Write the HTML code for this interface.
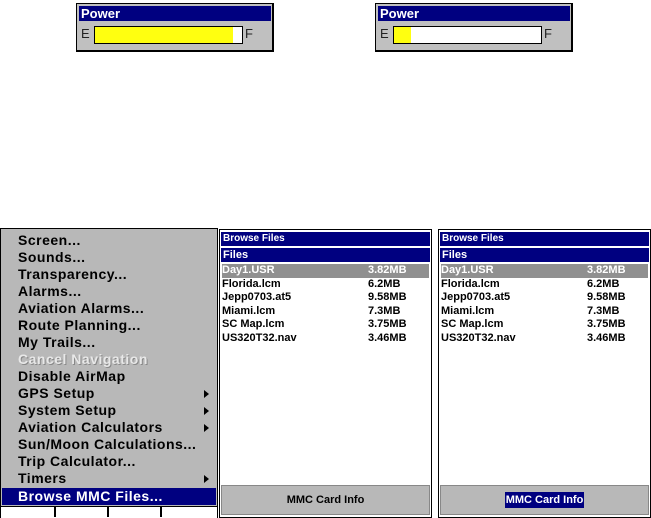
<html><head><style>
body{margin:0;width:651px;height:518px;background:#fff;position:relative;overflow:hidden;font-family:"Liberation Sans",sans-serif}
.a{position:absolute}
.pw{border:1px solid #000;border-right-width:2px;border-bottom-width:2px;background:#c0c0c0;width:195px;height:46px;top:3px}
.pw .t{left:2px;top:2px;width:192px;height:15px;background:#000080;color:#fff;font-weight:bold;font-size:13px;line-height:15px;text-indent:2px}
.pw .e{left:4px;top:22px;font-size:13px;color:#222}
.pw .f{left:168px;top:22px;font-size:13px;color:#222}
.pw .b{left:17px;top:22px;width:147px;height:16px;border:1px solid #000;background:#fff}
.menu{left:0;top:228px;width:216px;height:288px;border:1px solid #000;background:#b8b8b8}
.mi{left:17px;font-size:14px;font-weight:bold;color:#000;letter-spacing:.5px;line-height:17px}
.ar{right:8px;width:0;height:0;border-left:5px solid #000;border-top:4px solid transparent;border-bottom:4px solid transparent}
.fp{top:229px;width:211px;height:287px;border:1px solid #000;background:#fff}
.fp .t{left:1px;top:2px;width:209px;height:14px;background:#000080;color:#fff;font-size:10px;font-weight:bold;line-height:14px;text-indent:2px}
.fp .h{left:1px;top:18px;width:209px;height:14px;background:#000080;color:#fff;font-size:11px;font-weight:bold;line-height:14px;text-indent:2px}
.fp .r{left:2px;width:207px;height:13.5px;font-size:11px;font-weight:bold;line-height:13.5px}
.fp .r span{position:absolute;left:146px}
.fp .btn{left:1px;top:255px;width:207px;height:28px;background:#b8b8b8;border:1px solid #888;font-size:11px;font-weight:bold;text-align:center;line-height:28px}
</style></head><body>
<div class="a pw" style="left:76px"><div class="a t">Power</div><div class="a e">E</div><div class="a b"><div style="width:138px;height:16px;background:#ffff10"></div></div><div class="a f">F</div></div>
<div class="a pw" style="left:375px"><div class="a t">Power</div><div class="a e">E</div><div class="a b"><div style="width:17px;height:16px;background:#ffff10"></div></div><div class="a f">F</div></div>

<div class="a menu">
<div class="a mi" style="top:3px">Screen...</div>
<div class="a mi" style="top:20px">Sounds...</div>
<div class="a mi" style="top:37px">Transparency...</div>
<div class="a mi" style="top:54px">Alarms...</div>
<div class="a mi" style="top:71px">Aviation Alarms...</div>
<div class="a mi" style="top:88px">Route Planning...</div>
<div class="a mi" style="top:105px">My Trails...</div>
<div class="a mi" style="top:122px;color:#e8e8e8;text-shadow:1px 1px #888">Cancel Navigation</div>
<div class="a mi" style="top:139px">Disable AirMap</div>
<div class="a mi" style="top:156px">GPS Setup</div><div class="a ar" style="top:161px"></div>
<div class="a mi" style="top:173px">System Setup</div><div class="a ar" style="top:178px"></div>
<div class="a mi" style="top:190px">Aviation Calculators</div><div class="a ar" style="top:195px"></div>
<div class="a mi" style="top:207px">Sun/Moon Calculations...</div>
<div class="a mi" style="top:224px">Trip Calculator...</div>
<div class="a mi" style="top:241px">Timers</div><div class="a ar" style="top:246px"></div>
<div class="a" style="left:1px;top:259px;width:214px;height:17px;background:#000080"></div>
<div class="a mi" style="top:259px;color:#fff">Browse MMC Files...</div>
<div class="a" style="left:0;top:277px;width:216px;height:11px;background:#fff;border-top:1px solid #000"></div>
<div class="a" style="left:53px;top:277px;width:2px;height:11px;background:#000"></div>
<div class="a" style="left:106px;top:277px;width:2px;height:11px;background:#000"></div>
<div class="a" style="left:159px;top:277px;width:2px;height:11px;background:#000"></div>
</div>

<div class="a fp" style="left:219px">
<div class="a t">Browse Files</div><div class="a h">Files</div>
<div class="a r" style="top:34px;background:#909090;color:#fff">Day1.USR<span>3.82MB</span></div>
<div class="a r" style="top:47.5px">Florida.lcm<span>6.2MB</span></div>
<div class="a r" style="top:61px">Jepp0703.at5<span>9.58MB</span></div>
<div class="a r" style="top:74.5px">Miami.lcm<span>7.3MB</span></div>
<div class="a r" style="top:88px">SC Map.lcm<span>3.75MB</span></div>
<div class="a r" style="top:101.5px">US320T32.nav<span>3.46MB</span></div>
<div class="a btn">MMC Card Info</div>
</div>
<div class="a fp" style="left:438px">
<div class="a t">Browse Files</div><div class="a h">Files</div>
<div class="a r" style="top:34px;background:#909090;color:#fff">Day1.USR<span>3.82MB</span></div>
<div class="a r" style="top:47.5px">Florida.lcm<span>6.2MB</span></div>
<div class="a r" style="top:61px">Jepp0703.at5<span>9.58MB</span></div>
<div class="a r" style="top:74.5px">Miami.lcm<span>7.3MB</span></div>
<div class="a r" style="top:88px">SC Map.lcm<span>3.75MB</span></div>
<div class="a r" style="top:101.5px">US320T32.nav<span>3.46MB</span></div>
<div class="a btn"><span style="background:#000080;color:#fff;padding:2px 1px">MMC Card Info</span></div>
</div>
</body></html>
